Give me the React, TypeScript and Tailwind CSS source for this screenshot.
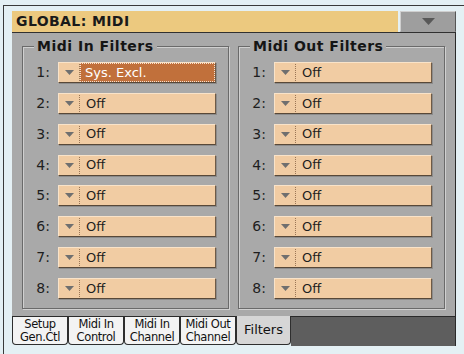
const font = { fontFamily: '"DejaVu Sans", "Liberation Sans", sans-serif' };

const Arrow = ({ w, h, color }: { w: number; h: number; color: string }) => (
	<svg width={w} height={h} viewBox={`0 0 ${w} ${h}`}>
		<polygon points={`0,0 ${w},0 ${w / 2},${h}`} fill={color} />
	</svg>
);

const FilterButton = ({ value, selected }: { value: string; selected?: boolean }) => {
	return (
		<div className="w-[158px] h-[21px] flex bg-[#f1cca3] border border-t-[#f9e3c9] border-l-[#f9e3c9] border-r-[#6e5a46] border-b-[#584838] shadow-[1px_1px_0_#8c8c8c]">
			<div className="w-[20px] flex items-center justify-center">
				<Arrow w={9} h={5} color="#6f6f6f" />
			</div>
			<div className="border-l border-dotted border-[#9a7656] my-[1px]"></div>
			{selected ? (
				<div className="flex-1 flex items-center bg-[#c1703b] outline outline-1 outline-dotted outline-[#f6e2d0] -outline-offset-1 pl-[5px] text-[13px] text-white">
					{value}
				</div>
			) : (
				<div className="flex-1 flex items-center pl-[6px] text-[13px] text-[#1e1e1e]">{value}</div>
			)}
		</div>
	);
};

const Group = ({ title, values }: { title: string; values: string[] }) => {
	return (
		<div className="w-[207px] flex flex-col border border-[#6a6a6a] shadow-[inset_1px_1px_0_#d0d0d0,1px_1px_0_#d0d0d0]">
			<div className="-mt-[9px] ml-[11px] px-[3px] w-fit bg-[#a9a9a9] h-[16px] leading-[16px] text-[14px] font-bold tracking-[0.5px] text-[#151515]">
				{title}
			</div>
			<div className="mt-[8px] flex flex-col gap-[9.85px]">
				{values.map((v, i) => (
					<div key={i} className="flex items-center h-[21px]">
						<div className="w-[35px] pr-[8px] text-right text-[14px] text-[#1e1e1e]">{i + 1}:</div>
						<FilterButton value={v} selected={i === 0 && v !== 'Off'} />
					</div>
				))}
			</div>
		</div>
	);
};

const Tab = ({ top, bottom }: { top: string; bottom: string }) => (
	<div className="w-[56px] h-[28px] bg-[#f3f3f3] border border-t-0 border-[#2e2e2e] rounded-b-[4px] flex flex-col items-center justify-center text-[11.5px] leading-[13px] text-[#111] tracking-[-0.4px]">
		<span>{top}</span>
		<span>{bottom}</span>
	</div>
);

const App = () => {
	const offs = ['Off', 'Off', 'Off', 'Off', 'Off', 'Off', 'Off'];
	return (
		<div className="w-[464px] h-[354px] bg-[#e4f0f4] pl-[3px] pt-[5px] overflow-hidden" style={font}>
			<div className="h-full border-l border-t border-[#3a3a3a] pl-[8px] pt-[5px]">
				<div className="w-[444px] flex flex-col">
					<div className="h-[22px] flex border-b border-[#303030]">
						<div className="flex-1 bg-[#ecc97f] flex items-center pl-[4px] text-[14px] font-bold tracking-[0.4px] text-[#1a1a1a]">
							GLOBAL: MIDI
						</div>
						<div className="w-[56px] ml-[2px] bg-[#9e9e9e] border border-t-[#cfcfcf] border-l-[#cfcfcf] border-r-[#555] border-b-[#9e9e9e] flex items-center justify-center">
							<Arrow w={13} h={7} color="#585858" />
						</div>
					</div>
					<div className="h-[284px] bg-[#a9a9a9] flex gap-[9px] pl-[10px] pt-[13px] pb-[7px] border-b border-r border-[#2a2a2a]">
						<Group title="Midi In Filters" values={['Sys. Excl.', ...offs]} />
						<Group title="Midi Out Filters" values={['Off', ...offs]} />
					</div>
					<div className="h-[29px] flex">
						<Tab top="Setup" bottom="Gen.Ctl" />
						<Tab top="Midi In" bottom="Control" />
						<Tab top="Midi In" bottom="Channel" />
						<Tab top="Midi Out" bottom="Channel" />
						<div className="w-[55px] h-[29px] -mt-[1px] bg-[#d6d6d6] border border-t-0 border-[#2e2e2e] rounded-b-[4px] flex items-center justify-center text-[13px] text-[#111]">
							Filters
						</div>
						<div className="flex-1 bg-[#5e5e5e] border-r border-[#2a2a2a]"></div>
					</div>
				</div>
			</div>
		</div>
	);
};

export default App;
